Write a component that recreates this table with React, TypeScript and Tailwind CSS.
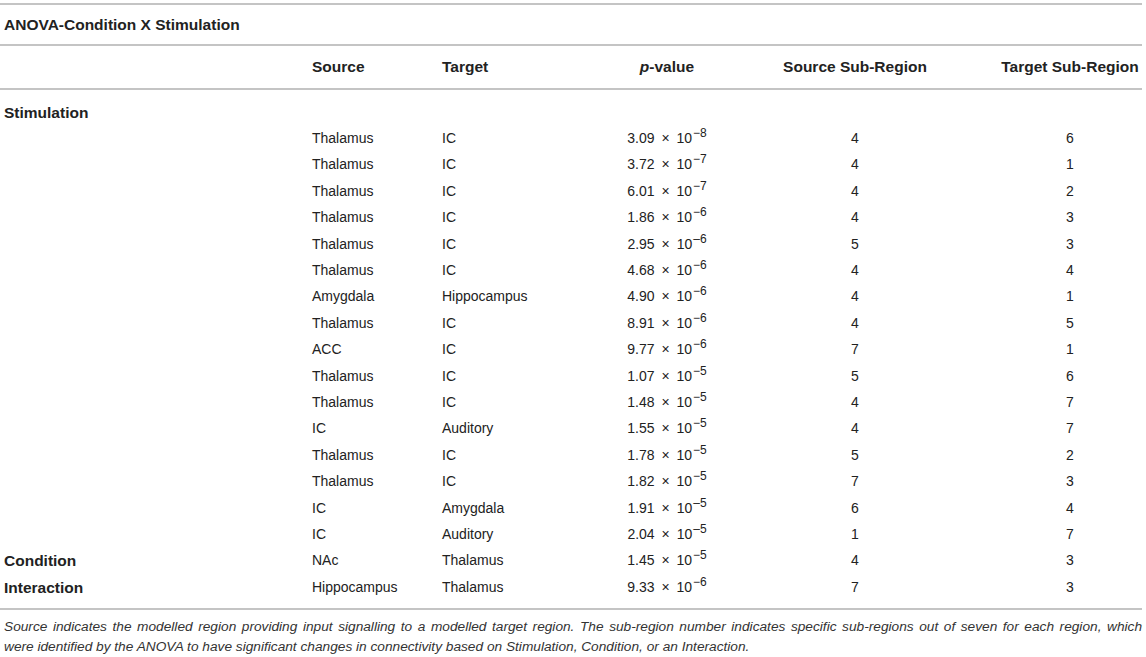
type Row = { label?: string; source: string; target: string; mant: string; exp: string; dash?: boolean; ss: string; ts: string };

const data: Row[] = [
  { source: 'Thalamus', target: 'IC', mant: '3.09', exp: '8', ss: '4', ts: '6' },
  { source: 'Thalamus', target: 'IC', mant: '3.72', exp: '7', ss: '4', ts: '1' },
  { source: 'Thalamus', target: 'IC', mant: '6.01', exp: '7', ss: '4', ts: '2' },
  { source: 'Thalamus', target: 'IC', mant: '1.86', exp: '6', ss: '4', ts: '3' },
  { source: 'Thalamus', target: 'IC', mant: '2.95', exp: '6', dash: true, ss: '5', ts: '3' },
  { source: 'Thalamus', target: 'IC', mant: '4.68', exp: '6', ss: '4', ts: '4' },
  { source: 'Amygdala', target: 'Hippocampus', mant: '4.90', exp: '6', ss: '4', ts: '1' },
  { source: 'Thalamus', target: 'IC', mant: '8.91', exp: '6', ss: '4', ts: '5' },
  { source: 'ACC', target: 'IC', mant: '9.77', exp: '6', ss: '7', ts: '1' },
  { source: 'Thalamus', target: 'IC', mant: '1.07', exp: '5', ss: '5', ts: '6' },
  { source: 'Thalamus', target: 'IC', mant: '1.48', exp: '5', ss: '4', ts: '7' },
  { source: 'IC', target: 'Auditory', mant: '1.55', exp: '5', ss: '4', ts: '7' },
  { source: 'Thalamus', target: 'IC', mant: '1.78', exp: '5', ss: '5', ts: '2' },
  { source: 'Thalamus', target: 'IC', mant: '1.82', exp: '5', ss: '7', ts: '3' },
  { source: 'IC', target: 'Amygdala', mant: '1.91', exp: '5', dash: true, ss: '6', ts: '4' },
  { source: 'IC', target: 'Auditory', mant: '2.04', exp: '5', dash: true, ss: '1', ts: '7' },
  { label: 'Condition', source: 'NAc', target: 'Thalamus', mant: '1.45', exp: '5', ss: '4', ts: '3' },
  { label: 'Interaction', source: 'Hippocampus', target: 'Thalamus', mant: '9.33', exp: '6', ss: '7', ts: '3' },
];

const grid = 'grid grid-cols-[312px_130px_150px_150px_256px_144px] items-center';

function PValue({ r }: { r: Row }) {
  return (
    <span>
      {r.mant}
      <span className="mx-[3px]"> × </span>
      10
      <sup className="text-[12px] relative -top-[6px] ml-[1px]">
        {r.dash ? '–' : '−'}
        {r.exp}
      </sup>
    </span>
  );
}

export default function App() {
  return (
    <div
      className="w-[1146px] h-[657px] bg-white text-[#222] text-[14px] pt-[3px] overflow-hidden"
      style={{ fontFamily: '"Liberation Sans", Arial, sans-serif' }}
    >
      <div className="w-[1142px]">
        <div className="border-t-2 border-[#c4c4c4]" />
        <div className="h-[39px] flex items-center pl-[4px] font-bold text-[15.5px]">ANOVA-Condition X Stimulation</div>
        <div className="border-t-2 border-[#c4c4c4]" />
        <div className={`${grid} h-[42px] font-bold text-[15.5px]`}>
          <div />
          <div>Source</div>
          <div>Target</div>
          <div className="text-center">
            <span className="italic">p</span>-value
          </div>
          <div className="text-center pr-[30px]">Source Sub-Region</div>
          <div className="text-center">Target Sub-Region</div>
        </div>
        <div className="border-t-2 border-[#c4c4c4]" />
        <div className="pt-[9px] pb-[8px]">
          <div className={`${grid} h-[26.4px]`}>
            <div className="pl-[4px] font-bold text-[15.5px]">Stimulation</div>
          </div>
          {data.map((r, i) => (
            <div key={i} className={`${grid} h-[26.4px]`}>
              <div className="pl-[4px] font-bold text-[15.5px]">{r.label ?? ''}</div>
              <div>{r.source}</div>
              <div>{r.target}</div>
              <div className="text-center">
                <PValue r={r} />
              </div>
              <div className="text-center pr-[30px]">{r.ss}</div>
              <div className="text-center">{r.ts}</div>
            </div>
          ))}
        </div>
        <div className="border-t-2 border-[#c4c4c4]" />
        <div className="pt-[7px] pl-[4px] italic text-[13.7px] leading-[20px] text-[#333]">
          <p className="text-justify [text-align-last:justify] whitespace-nowrap">
            Source indicates the modelled region providing input signalling to a modelled target region. The sub-region
            number indicates specific sub-regions out of seven for each region, which
          </p>
          <p className="whitespace-nowrap">
            were identified by the ANOVA to have significant changes in connectivity based on Stimulation, Condition, or an
            Interaction.
          </p>
        </div>
      </div>
    </div>
  );
}
